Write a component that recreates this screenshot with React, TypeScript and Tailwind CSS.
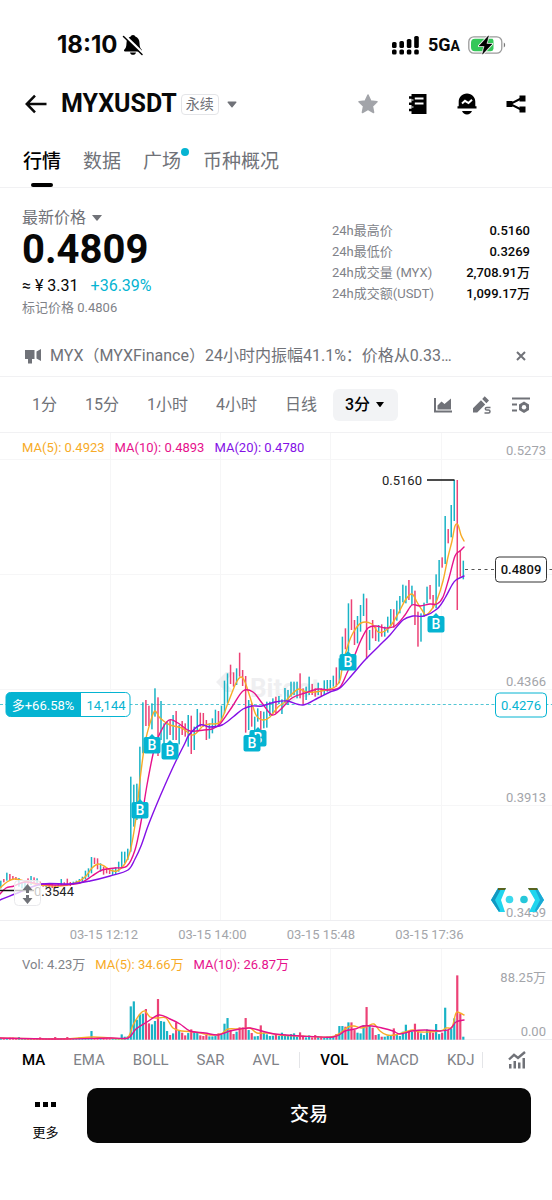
import type { ReactNode } from 'react';

const TEAL = '#19b3c6';
const RED = '#ec4276';
const ORANGE = '#f7ab27';
const PINK = '#e6118c';
const PURPLE = '#8410e6';

type Kind = 'u' | 'd';
type Row = [Kind, number, number];

// Each section holds candle highs and lows in thirds of a unit below its own origin.
const sections: { origin: number; rows: Row[] }[] = [
  {
    origin: 640,
    rows: [
      ['u', 722, 745], ['d', 717, 727], ['u', 698, 722], ['d', 702, 722], ['d', 708, 718], ['d', 711, 720], ['u', 714, 740],
      ['u', 728, 745], ['u', 722, 745], ['d', 715, 735], ['u', 708, 735], ['d', 712, 730], ['u', 715, 730], ['d', 725, 738],
      ['d', 730, 740], ['u', 732, 742], ['d', 730, 742], ['d', 732, 744], ['d', 735, 745], ['u', 730, 740], ['u', 717, 735],
      ['d', 727, 735], ['d', 716, 735], ['d', 726, 738], ['u', 725, 735], ['u', 722, 732], ['u', 717, 730], ['u', 710, 728],
      ['u', 692, 718], ['u', 685, 712], ['u', 651, 700], ['d', 653, 672], ['d', 655, 688], ['u', 670, 695], ['d', 680, 704],
      ['d', 683, 700], ['d', 686, 702], ['u', 688, 705], ['u', 682, 703], ['u', 665, 695], ['u', 635, 682], ['u', 635, 670],
      ['u', 626, 660], ['u', 410, 635], ['u', 434, 560], ['u', 431, 540], ['u', 320, 500], ['u', 187, 340], ['d', 180, 258],
      ['d', 197, 258], ['u', 190, 268], ['u', 145, 230], ['d', 172, 348], ['u', 183, 300], ['u', 250, 320], ['u', 245, 298],
      ['d', 240, 285], ['u', 225, 300], ['d', 213, 300], ['u', 255, 313], ['d', 243, 285], ['d', 250, 290], ['u', 225, 320],
    ],
  },
  {
    origin: 580,
    rows: [
      ['d', 407, 522], ['u', 440, 510], ['u', 387, 455], ['d', 398, 440], ['d', 399, 440], ['d', 420, 480], ['u', 430, 476],
      ['u', 415, 460], ['u', 389, 440], ['d', 393, 435], ['u', 377, 420], ['u', 302, 400], ['u', 280, 370], ['d', 254, 312],
      ['d', 277, 320], ['u', 265, 315], ['d', 218, 290], ['d', 270, 318], ['d', 288, 458], ['u', 360, 450], ['d', 370, 440],
      ['u', 410, 455], ['u', 385, 425], ['d', 393, 450], ['u', 395, 445], ['u', 365, 443], ['u', 365, 408], ['u', 355, 400],
      ['d', 350, 400], ['u', 348, 372], ['u', 358, 402], ['u', 324, 370], ['u', 330, 375], ['u', 305, 350], ['u', 305, 345],
      ['u', 305, 355], ['d', 280, 355], ['d', 325, 372], ['u', 320, 360], ['u', 290, 345], ['d', 312, 345], ['d', 325, 350],
      ['u', 308, 345], ['d', 325, 350], ['u', 301, 345], ['u', 300, 335], ['u', 300, 330], ['u', 287, 320], ['d', 262, 320],
      ['u', 235, 310], ['u', 170, 260], ['d', 145, 208], ['u', 70, 215], ['d', 58, 150], ['d', 120, 195], ['u', 108, 190],
      ['u', 75, 155], ['u', 41, 108], ['d', 55, 237], ['u', 150, 210], ['d', 120, 175], ['d', 140, 183],
    ],
  },
  {
    origin: 440,
    rows: [
      ['u', 555, 605], ['d', 553, 590], ['u', 560, 590], ['u', 530, 578], ['u', 507, 560], ['d', 508, 563], ['u', 482, 542],
      ['u', 468, 520], ['u', 434, 487], ['u', 437, 490], ['d', 420, 480], ['u', 437, 495], ['d', 452, 555], ['d', 515, 620],
      ['u', 520, 605], ['u', 488, 530], ['u', 440, 490], ['d', 435, 478], ['d', 465, 505], ['u', 403, 505], ['u', 360, 440],
      ['d', 352, 383], ['u', 228, 372], ['d', 267, 310], ['u', 195, 292], ['u', 120, 243], ['d', 120, 510], ['d', 330, 410],
      ['u', 362, 418],
    ],
  },
];

const candles = sections.flatMap(({ origin, rows }) =>
  rows.map(([kind, high, low]) => ({ kind, top: origin + high / 3, bottom: origin + low / 3 })),
);

const candleX = (i: number) => 0.8 + i * 3.023;

// Trade volume per candle; 194 stands for 88.25万.
const volumes = [
  5, 5, 4, 6, 6, 4, 8, 5, 4, 4, 4, 5, 4, 7, 3, 4, 4, 4, 8, 3, 4, 4, 8, 3, 4, 4, 7, 3, 5, 6, 26, 5, 5, 4, 5, 4, 4, 5, 5, 4, 16, 9, 10,
  100, 115, 60, 76, 78, 92, 49, 46, 56, 122, 56, 54, 26, 14, 19, 52, 27, 21, 13, 20, 31, 22, 23, 13, 11, 14, 10, 10, 11, 19, 14,
  48, 65, 29, 17, 24, 37, 37, 65, 29, 20, 10, 11, 43, 21, 16, 11, 12,
  17, 11, 21, 16, 13, 17, 19, 9, 22, 12, 7, 13, 7, 14, 11, 9, 7, 9, 9, 9, 17, 41, 41, 39, 52, 52, 29, 21, 19, 44, 98, 41, 36, 14,
  17, 9, 9, 11, 12, 34, 14, 11, 24, 45, 26, 24, 48, 29, 19, 14, 31, 29, 21, 47, 17, 21, 96, 29, 34, 64, 193, 79, 9,
];

type Point = [number, number];

const ma5: Point[] = [
  [0, 888], [7, 882], [14, 879], [25, 881], [40, 885], [60, 886], [75, 883], [85, 877], [92, 868], [98, 864], [104, 866], [110, 870],
  [117, 871], [124, 865], [130, 852], [136, 818], [140, 780], [145, 743], [151, 720], [155, 711], [160, 718], [170, 725], [182, 728],
  [193, 735], [203, 726], [210, 724], [220, 722], [228, 703], [236, 683], [241, 677], [245, 682], [250, 697], [256, 715], [263, 720],
  [270, 717], [278, 707], [285, 702], [292, 694], [299, 689], [306, 692], [315, 692], [326, 690], [335, 687], [340, 680], [343, 663],
  [348, 645], [353, 633], [361, 623], [372, 624], [378, 632], [385, 631], [392, 624], [399, 612], [406, 599], [412, 594], [417, 602],
  [422, 610], [426, 615], [432, 609], [437, 600], [443, 581], [448, 557], [452, 541], [455, 526], [458, 525], [461, 535], [464, 541],
];
const ma10: Point[] = [
  [0, 894], [6, 888], [14, 886], [25, 882], [40, 884], [60, 885], [80, 883], [92, 876], [102, 870], [115, 868], [127, 866], [135, 850],
  [141, 822], [147, 785], [154, 750], [160, 733], [169, 720], [178, 723], [190, 731], [204, 730], [212, 729], [220, 724], [232, 707],
  [243, 691], [253, 692], [262, 703], [272, 715], [280, 710], [292, 698], [305, 693], [318, 689], [330, 690], [340, 687], [347, 673],
  [354, 657], [361, 640], [368, 628], [376, 626], [385, 628], [395, 626], [405, 615], [412, 605], [420, 606], [430, 604], [437, 604],
  [443, 597], [449, 578], [455, 556], [460, 551], [464, 547],
];
const ma20: Point[] = [
  [0, 900], [20, 892], [42, 884], [70, 884], [90, 881], [110, 876], [128, 870], [135, 859], [141, 846], [148, 826], [156, 806],
  [165, 785], [175, 763], [185, 743], [189, 735], [200, 725], [210, 727], [222, 725], [233, 717], [243, 709], [252, 706], [262, 706],
  [275, 702], [287, 701], [303, 705], [318, 698], [330, 692], [340, 688], [352, 675], [365, 660], [379, 646], [390, 635], [403, 620],
  [413, 616], [424, 616], [437, 609], [445, 598], [452, 585], [456, 580], [464, 576],
];
const volMa5: Point[] = [
  [0, 1038], [60, 1039], [92, 1037], [110, 1038], [127, 1038], [133, 1025], [140, 1014], [145, 1011], [150, 1017], [158, 1018],
  [166, 1018], [173, 1028], [182, 1031], [195, 1032], [210, 1035], [221, 1034], [228, 1029], [240, 1029], [250, 1028], [257, 1033],
  [268, 1033], [280, 1035], [300, 1036], [330, 1037], [340, 1033], [348, 1027], [354, 1026], [361, 1028], [368, 1026], [374, 1024],
  [380, 1031], [387, 1035], [395, 1035], [405, 1032], [413, 1030], [420, 1032], [440, 1031], [446, 1028], [452, 1027], [456, 1013],
  [460, 1013], [464, 1015],
];
const volMa10: Point[] = [
  [0, 1038], [60, 1039], [110, 1038], [128, 1038], [136, 1029], [147, 1022], [159, 1015], [170, 1019], [180, 1024], [190, 1031],
  [205, 1033], [218, 1035], [230, 1031], [240, 1029], [250, 1028], [262, 1031], [275, 1034], [300, 1036], [333, 1037], [345, 1031],
  [355, 1029], [363, 1026], [372, 1026], [382, 1028], [393, 1031], [400, 1034], [412, 1031], [425, 1030], [440, 1031], [450, 1029],
  [456, 1022], [464, 1020],
];

function smooth(points: Point[]) {
  return points.reduce((path, [x, y], i) => {
    if (i === 0) return `M${x} ${y}`;
    const before = points[Math.max(0, i - 2)];
    const from = points[i - 1];
    const after = points[Math.min(points.length - 1, i + 1)];
    const c1 = [from[0] + (x - before[0]) / 6, from[1] + (y - before[1]) / 6];
    const c2 = [x - (after[0] - from[0]) / 6, y - (after[1] - from[1]) / 6];
    return `${path}C${c1.join(' ')} ${c2.join(' ')} ${x} ${y}`;
  }, '');
}

function Line({ points, color }: { points: Point[]; color: string }) {
  return <path d={smooth(points)} fill="none" stroke={color} strokeWidth="1.4" strokeLinejoin="round" strokeLinecap="round" />;
}

function BuyMark({ x, y }: { x: number; y: number }) {
  return (
    <g transform={`translate(${x} ${y})`}>
      <path d="M0-11l3 3h3.500a2 2 0 0 1 2 2V6.500a2 2 0 0 1-2 2H-6.500a2 2 0 0 1-2-2V-6a2 2 0 0 1 2-2h3.500z" fill="#05b4d2" />
      <text y="5" textAnchor="middle" fontSize="14" fontWeight="500" fill="#fff">B</text>
    </g>
  );
}

function PriceChart() {
  return (
    <svg viewBox="0 433 552 487" className="block h-auto w-full" role="img" aria-label="MYXUSDT 3分">
      <g stroke="#f6f6f7" strokeWidth="1">
        {[459.5, 574.5, 689.5, 805.5].map((y) => <path key={y} d={`M0 ${y}H552`} />)}
        {[110.5, 220.5, 330.5, 441.5].map((x) => <path key={x} d={`M${x} 433V920`} />)}
      </g>
      <g fill="#efeff1">
        <path d="M226 672h8l-9 10 9 10h-8l-10-10z" />
        <text x="250" y="697" fontSize="26" fontWeight="700">Bitget</text>
      </g>
      <g fontSize="13" fill="#a3a5aa" textAnchor="end">
        <text x="546" y="455">0.5273</text>
        <text x="546" y="686">0.4366</text>
        <text x="546" y="802">0.3913</text>
        <text x="546" y="917">0.3459</text>
      </g>
      <path d="M0 704.5H552" stroke={TEAL} strokeOpacity=".75" strokeDasharray="3 2.4" />
      {candles.map((c, i) => (
        <rect key={i} x={candleX(i) - 0.75} y={c.top} width="1.5" height={c.bottom - c.top} fill={c.kind === 'u' ? TEAL : RED} />
      ))}
      <Line points={ma5} color={ORANGE} />
      <Line points={ma10} color={PINK} />
      <Line points={ma20} color={PURPLE} />

      <path d="M427 480h27.500M0 890.500h34" stroke="#111" strokeWidth="1.5" />
      <text x="382" y="485" fontSize="13" fill="#222">0.5160</text>
      <text x="34" y="896" fontSize="13" fill="#222">0.3544</text>
      <rect x="14.500" y="880.500" width="26" height="25" rx="4" fill="#fff" fillOpacity=".75" stroke="#e9e9ec" />
      <path d="M27.500 884l5 6h-3.500v8h3.500l-5 6-5-6h3.500v-8h-3.500z" fill="#707278" />
      <path d="M21 894h13" stroke="#fff" strokeWidth="2" />

      <BuyMark x={140} y={810} />
      <BuyMark x={152} y={745} />
      <BuyMark x={170} y={751} />
      <BuyMark x={258} y={738} />
      <BuyMark x={252} y={743} />
      <BuyMark x={348} y={662} />
      <BuyMark x={436} y={624} />

      <path d="M465 569.500H552" stroke="#555" strokeDasharray="3 3.500" />
      <rect x="495.500" y="557" width="51" height="25" rx="3.500" fill="#fff" stroke="#333" />
      <text x="521" y="574" fontSize="13" fontWeight="500" fill="#111" textAnchor="middle">0.4809</text>
      <rect x="495.500" y="693" width="51" height="24" rx="4" fill="#fff" stroke="#05b4d2" />
      <text x="521" y="710" fontSize="13" fill="#05b4d2" textAnchor="middle">0.4276</text>

      <rect x="6" y="692.500" width="124" height="24" rx="4.500" fill="#fff" stroke="#05b4d2" />
      <path d="M10.500 692.500H81v24H10.500a4.500 4.500 0 0 1-4.500-4.500v-15a4.500 4.500 0 0 1 4.500-4.500z" fill="#05b4d2" />
      <text x="43" y="709.500" fontSize="13" fill="#fff" textAnchor="middle">多+66.58%</text>
      <text x="106" y="709.500" fontSize="13" fill="#05b4d2" textAnchor="middle">14,144</text>

      <g>
        <path d="M498 888h8l-5 12 4 12h-6l-8-12z" fill="#21d5ee" />
        <path d="M498 888l-7 12 8 12 1-2-5-10 6-11z" fill="#1298c2" />
        <path d="M498 888h8l-1 2h-7z" fill="#59631f" />
        <path d="M528 888h9l7 12-8 12h-7l6-12z" fill="#21d5ee" />
        <path d="M537 888l7 12-8 12-1-2 5-10-5-11z" fill="#1ba9d5" />
        <path d="M528 888h9l1 2h-9z" fill="#59631f" />
        <circle cx="509.500" cy="899.500" r="3.800" fill="#3bd9ed" />
        <circle cx="524" cy="899.500" r="3.800" fill="#26c7da" />
      </g>
    </svg>
  );
}

function VolumeChart() {
  return (
    <svg viewBox="0 949 552 91" className="block h-auto w-full" role="img" aria-label="VOL">
      <g stroke="#f6f6f7">
        {[110.5, 220.5, 330.5, 441.5].map((x) => <path key={x} d={`M${x} 949V1040`} />)}
        <path d="M0 1039.500H552" stroke="#ededf0" />
      </g>
      {volumes.map((v, i) => (
        <rect key={i} x={candleX(i) - 1.1} y={1039.7 - v / 3} width="2.2" height={v / 3} fill={candles[i].kind === 'u' ? TEAL : RED} />
      ))}
      <Line points={volMa5} color={ORANGE} />
      <Line points={volMa10} color={PINK} />
      <g fontSize="13" fill="#a3a5aa" textAnchor="end">
        <text x="546" y="982">88.25万</text>
        <text x="546" y="1036">0.00</text>
      </g>
    </svg>
  );
}

function IconButton({ label, children }: { label: string; children: ReactNode }) {
  return <button type="button" aria-label={label} className="flex items-center justify-center">{children}</button>;
}

function StatusBar() {
  return (
    <div className="flex h-16 items-center justify-between pt-[26px] pr-[46px] pl-[57px]">
      <div className="flex items-center gap-1">
        <span className="font-['Inter',sans-serif] text-2xl leading-7 font-bold">18:10</span>
        <svg width="22" height="22" viewBox="0 0 22 22" aria-hidden="true">
          <path d="M11 1c1.500 0 2 .8 2.300 1.600C16 3.500 17.500 6 17.500 9c0 4 1 5.500 2.300 6.800.5.700.2 1.700-.8 1.700H3c-1 0-1.300-1-.8-1.700C3.500 14.500 4.500 13 4.500 9c0-3 1.500-5.500 4.200-6.400C9 1.800 9.500 1 11 1zM8 18.500h6c-.3 1.500-1.500 2.300-3 2.300s-2.700-.8-3-2.300z" />
          <path d="M2.500 1.500l18.500 18" stroke="#fff" strokeWidth="3" />
          <path d="M1.500 2.500L20 20.500" stroke="#000" strokeWidth="1.500" strokeLinecap="round" />
        </svg>
      </div>
      <div className="flex items-center">
        <svg width="28" height="20" viewBox="0 0 28 20" aria-hidden="true">
          {[[0, 7, 6], [7.4, 6, 7], [14.8, 4, 9], [22.2, 1, 12]].map(([x, y, h]) => (
            <g key={x}>
              <rect x={x} y={y} width="4.600" height={h} rx="1.600" />
              <rect x={x} y="14.500" width="4.600" height="5" rx="1.600" />
            </g>
          ))}
        </svg>
        <span className="ml-2 text-lg leading-6 font-bold">5G<span className="text-sm">A</span></span>
        <svg className="ml-2" width="38" height="20" viewBox="0 0 38 20" aria-hidden="true">
          <rect x=".8" y="1.800" width="33" height="16.400" rx="5" fill="#fff" stroke="#9b9b9b" strokeWidth="1.300" />
          <path d="M7 3.800h17.500a3 3 0 0 1 1 2.500v7.400a3 3 0 0 1-3 2.500H7a4 4 0 0 1-4-4V7.800a4 4 0 0 1 4-4z" fill="#35c759" />
          <path d="M20.500 .8L11 11h5.500L14.500 19.200 24 9H18.500z" stroke="#fff" strokeWidth="2" strokeLinejoin="round" />
          <path d="M20.500 .8L11 11h5.500L14.500 19.200 24 9H18.500z" stroke="#000" strokeWidth=".5" />
          <path d="M35.800 7.500c1.800.7 1.800 4.300 0 5z" fill="#777" />
        </svg>
      </div>
    </div>
  );
}

function Header() {
  return (
    <header className="mt-5 flex h-10 items-center justify-between pr-[26px] pl-[25px]">
      <div className="flex items-center">
        <IconButton label="返回">
          <svg width="22" height="20" viewBox="0 0 22 20" fill="none" stroke="#0a0a0a" strokeWidth="2.500">
            <path d="M21.500 10H2.500M10 1.700L1.800 10l8.200 8.300" />
          </svg>
        </IconButton>
        <h1 className="ml-3.5 text-[25px] leading-8 font-bold">MYXUSDT</h1>
        <button type="button" className="ml-1 flex items-center gap-2">
          <span className="rounded border border-[#e4e5e8] px-1 text-[14px] leading-[19px] text-[#707278]">永续</span>
          <svg width="10" height="7" viewBox="0 0 10 7" fill="#707278" aria-hidden="true"><path d="M1 .5h8a.6.6 0 0 1 .4 1L5.500 6.300a.7.7 0 0 1-1 0L.6 1.500a.6.6 0 0 1 .4-1z" /></svg>
        </button>
      </div>
      <div className="flex items-center gap-[29px]">
        <IconButton label="收藏">
          <svg width="22" height="22" viewBox="0 0 22 22" fill="#a2a4a9"><path d="M11 2l2.700 5.900 6.300.8-4.600 4.400 1.200 6.400L11 16.400l-5.600 3.100 1.200-6.400L2 8.700l6.300-.8z" strokeLinejoin="round" strokeWidth="1.500" stroke="#a2a4a9" /></svg>
        </IconButton>
        <IconButton label="资讯">
          <svg width="20" height="22" viewBox="0 0 20 22">
            <path d="M3.500 1H18.500v20H3.500z" />
            <path d="M1 4.500h5M1 10.700h5M1 17h5" stroke="#000" strokeWidth="2.400" />
            <path d="M3.500 7h2M3.500 14h2" stroke="#fff" strokeWidth="1" />
            <path d="M6.800 5.500H15.500M6.800 10.500H15.500" stroke="#fff" strokeWidth="2" />
          </svg>
        </IconButton>
        <IconButton label="提醒">
          <svg width="20" height="22" viewBox="0 0 20 22">
            <path d="M10 .5c5 0 8.300 3.700 8.300 8.300v4.400H19.500v2.300H.5v-2.300h1.200V8.800C1.700 4.200 5 .5 10 .5zM5 18h10c-1 2-2.600 3.500-5 3.500s-4-1.500-5-3.500z" />
            <path d="M5 10.500l3-2.700 3.500 2.200L15 6.800" fill="none" stroke="#fff" strokeWidth="2" />
          </svg>
        </IconButton>
        <IconButton label="分享">
          <svg width="20" height="20" viewBox="0 0 20 20">
            <path d="M16 4L4 10l12 6" fill="none" stroke="#000" strokeWidth="2" />
            <path d="M.5 7h6v6h-6zM13.500 1.500h6v6h-6zM13.500 12.500h6v6h-6z" />
          </svg>
        </IconButton>
      </div>
    </header>
  );
}

function Tabs() {
  return (
    <nav className="mt-2 flex h-14 items-stretch gap-[22px] border-b border-[#f1f1f3] px-[23px] text-[19px] leading-[59px] text-[#707278]">
      <a href="#market" className="relative font-medium text-black">
        行情
        <span className="absolute bottom-0 left-2 h-1 w-[22px] rounded-sm bg-black" />
      </a>
      <a href="#data">数据</a>
      <a href="#square" className="relative">
        广场
        <span className="absolute top-4 -right-2 size-2 rounded-full bg-[#05b4d2]" />
      </a>
      <a href="#about">币种概况</a>
    </nav>
  );
}

const stats = [
  ['24h最高价', '0.5160'],
  ['24h最低价', '0.3269'],
  ['24h成交量 (MYX)', '2,708.91万'],
  ['24h成交额(USDT)', '1,099.17万'],
];

function Summary() {
  return (
    <section className="flex items-start justify-between px-[22px] pt-5">
      <div>
        <button type="button" className="flex items-center gap-1.5 text-base leading-5 text-[#707278]">
          最新价格
          <svg width="10" height="6" viewBox="0 0 10 6" fill="#707278" aria-hidden="true"><path d="M0 0h10L5.500 5.600a.7.7 0 0 1-1 0z" /></svg>
        </button>
        <div className="text-[40px] leading-[44px] font-bold">0.4809</div>
        <div className="mt-0.5 flex gap-3 text-base leading-6">
          <span>≈ ¥ 3.31</span>
          <span className="text-[#05b4d2]">+36.39%</span>
        </div>
        <div className="text-[13px] leading-5 text-[#808288]">标记价格 0.4806</div>
      </div>
      <dl className="mt-3 w-[198px] text-[13px] leading-[21px]">
        {stats.map(([name, value]) => (
          <div key={name} className="flex justify-between">
            <dt className="text-[#808288]">{name}</dt>
            <dd className="font-medium">{value}</dd>
          </div>
        ))}
      </dl>
    </section>
  );
}

function Notice() {
  return (
    <div className="mt-[18px] flex h-[41px] items-center border-b border-[#f1f1f3] pr-[26px] pl-6 text-[#707278]">
      <svg width="18" height="16" viewBox="0 0 18 16" fill="#707278" aria-hidden="true" className="shrink-0">
        <path d="M1 2h9.500v9H8v4.500H4V11H1zM12.500 3.500L17 1v12l-4.500-2.500z" />
      </svg>
      <p className="ml-2 min-w-0 flex-1 truncate text-base">MYX（MYXFinance）24小时内振幅41.1%：价格从0.33…</p>
      <IconButton label="关闭">
        <svg width="10" height="10" viewBox="0 0 10 10" stroke="#707278" strokeWidth="2"><path d="M1 1l8 8M9 1L1 9" /></svg>
      </IconButton>
    </div>
  );
}

function Timeframes() {
  return (
    <div className="flex h-14 items-center justify-between border-b border-[#f1f1f3] pr-[22px] pl-8 text-[#707278]">
      <div className="flex items-center gap-7 text-base leading-5">
        <button type="button">1分</button>
        <button type="button">15分</button>
        <button type="button">1小时</button>
        <button type="button">4小时</button>
        <button type="button">日线</button>
        <button type="button" className="-ml-3 flex h-8 items-center gap-1.5 rounded-md bg-[#f2f3f5] pr-3.5 pl-3 font-medium text-black">
          3分
          <svg width="8" height="5" viewBox="0 0 8 5" aria-hidden="true"><path d="M0 0h8L4.500 4.700a.7.7 0 0 1-1 0z" /></svg>
        </button>
      </div>
      <div className="flex items-center gap-5">
        <IconButton label="图表类型">
          <svg width="18" height="18" viewBox="0 0 18 18" fill="#707278">
            <path d="M0 2h2v12.500h16v2H0z" />
            <path d="M3.500 13.500V9.500l4-4 3 2.500L17 2.500v11z" />
          </svg>
        </IconButton>
        <IconButton label="画线">
          <svg width="20" height="20" viewBox="0 0 20 20" fill="#707278">
            <path d="M1 13.200L9 5.200l4.200 4.200-8 8H1zM10.200 4l2.500-2.700 4.300 4.300-2.600 2.600z" />
            <path d="M18.500 12.500h-3.700q-1.500 0-1.500 1.300 0 1.300 1.500 1.300h1.700q1.500 0 1.500 1.400 0 1.500-1.500 1.500h-4" fill="none" stroke="#707278" strokeWidth="1.500" />
          </svg>
        </IconButton>
        <IconButton label="设置">
          <svg width="18" height="18" viewBox="0 0 18 18">
            <path d="M0 2.500h18M0 8.500h5M0 14.500h5" stroke="#707278" strokeWidth="2.200" />
            <path d="M12 5.500l5 2.900v5.700L12 17l-5-2.900V8.400z" fill="#707278" />
            <circle cx="12" cy="11.300" r="2.200" fill="#fff" />
          </svg>
        </IconButton>
      </div>
    </div>
  );
}

function Indicators() {
  return (
    <div className="flex h-10 items-center justify-between pr-[26px] pl-[22px] text-[15px] leading-5 text-[#808288]">
      <div className="flex items-center gap-7">
        <button type="button" className="font-medium text-black">MA</button>
        <button type="button">EMA</button>
        <button type="button">BOLL</button>
        <button type="button">SAR</button>
        <button type="button">AVL</button>
        <span className="-mx-2 h-4 w-px bg-[#e4e5e8]" />
        <button type="button" className="font-medium text-black">VOL</button>
        <button type="button">MACD</button>
        <button type="button">KDJ</button>
        <span className="-ml-5 h-4 w-px bg-[#e4e5e8]" />
      </div>
      <IconButton label="指标">
        <svg width="18" height="18" viewBox="0 0 18 18" fill="#707278">
          <path d="M1 13h2.500v4.500H1zM5.500 10H8v7.500H5.500zM10 11.500h2.500v6H10zM14.500 7H17v10.500h-2.500z" />
          <path d="M1 8.500L6 3.800 10 7l7-6" fill="none" stroke="#707278" strokeWidth="2.400" />
        </svg>
      </IconButton>
    </div>
  );
}

const dates = ['03-15 12:12', '03-15 14:00', '03-15 15:48', '03-15 17:36'];

export default function App() {
  return (
    <main className="min-h-screen bg-white pb-14 font-['Roboto','Noto_Sans_CJK_SC',sans-serif] text-[#080808]">
      <StatusBar />
      <Header />
      <Tabs />
      <Summary />
      <Notice />
      <Timeframes />
      <section className="relative">
        <PriceChart />
        <div className="absolute top-[5px] left-[22px] flex gap-2.5 text-[13px] leading-5">
          <span className="text-[#f7ab27]">MA(5): 0.4923</span>
          <span className="text-[#e6118c]">MA(10): 0.4893</span>
          <span className="text-[#8410e6]">MA(20): 0.4780</span>
        </div>
      </section>
      <div className="flex h-[29px] items-center border-y border-[#eeeef1] pl-[9%] text-[13px] leading-5 text-[#a3a5aa]">
        {dates.map((date) => <span key={date} className="w-[21.6%] text-center whitespace-nowrap">{date}</span>)}
      </div>
      <section className="relative">
        <VolumeChart />
        <div className="absolute top-1.5 left-[22px] flex gap-2.5 text-[13px] leading-5">
          <span className="text-[#808288]">Vol: 4.23万</span>
          <span className="text-[#f7ab27]">MA(5): 34.66万</span>
          <span className="text-[#e6118c]">MA(10): 26.87万</span>
        </div>
      </section>
      <Indicators />
      <div className="mt-2 flex items-end pr-[21px]">
        <button type="button" className="flex w-[87px] shrink-0 flex-col items-center gap-4 pl-1 text-[13px] leading-5">
          <svg width="21" height="5" viewBox="0 0 21 5" aria-hidden="true"><path d="M0 0h5v5H0zM8 0h5v5H8zM16 0h5v5h-5z" /></svg>
          更多
        </button>
        <button type="button" className="h-[55px] flex-1 rounded-[10px] bg-[#080808] text-[19px] font-medium text-white">交易</button>
      </div>
    </main>
  );
}
